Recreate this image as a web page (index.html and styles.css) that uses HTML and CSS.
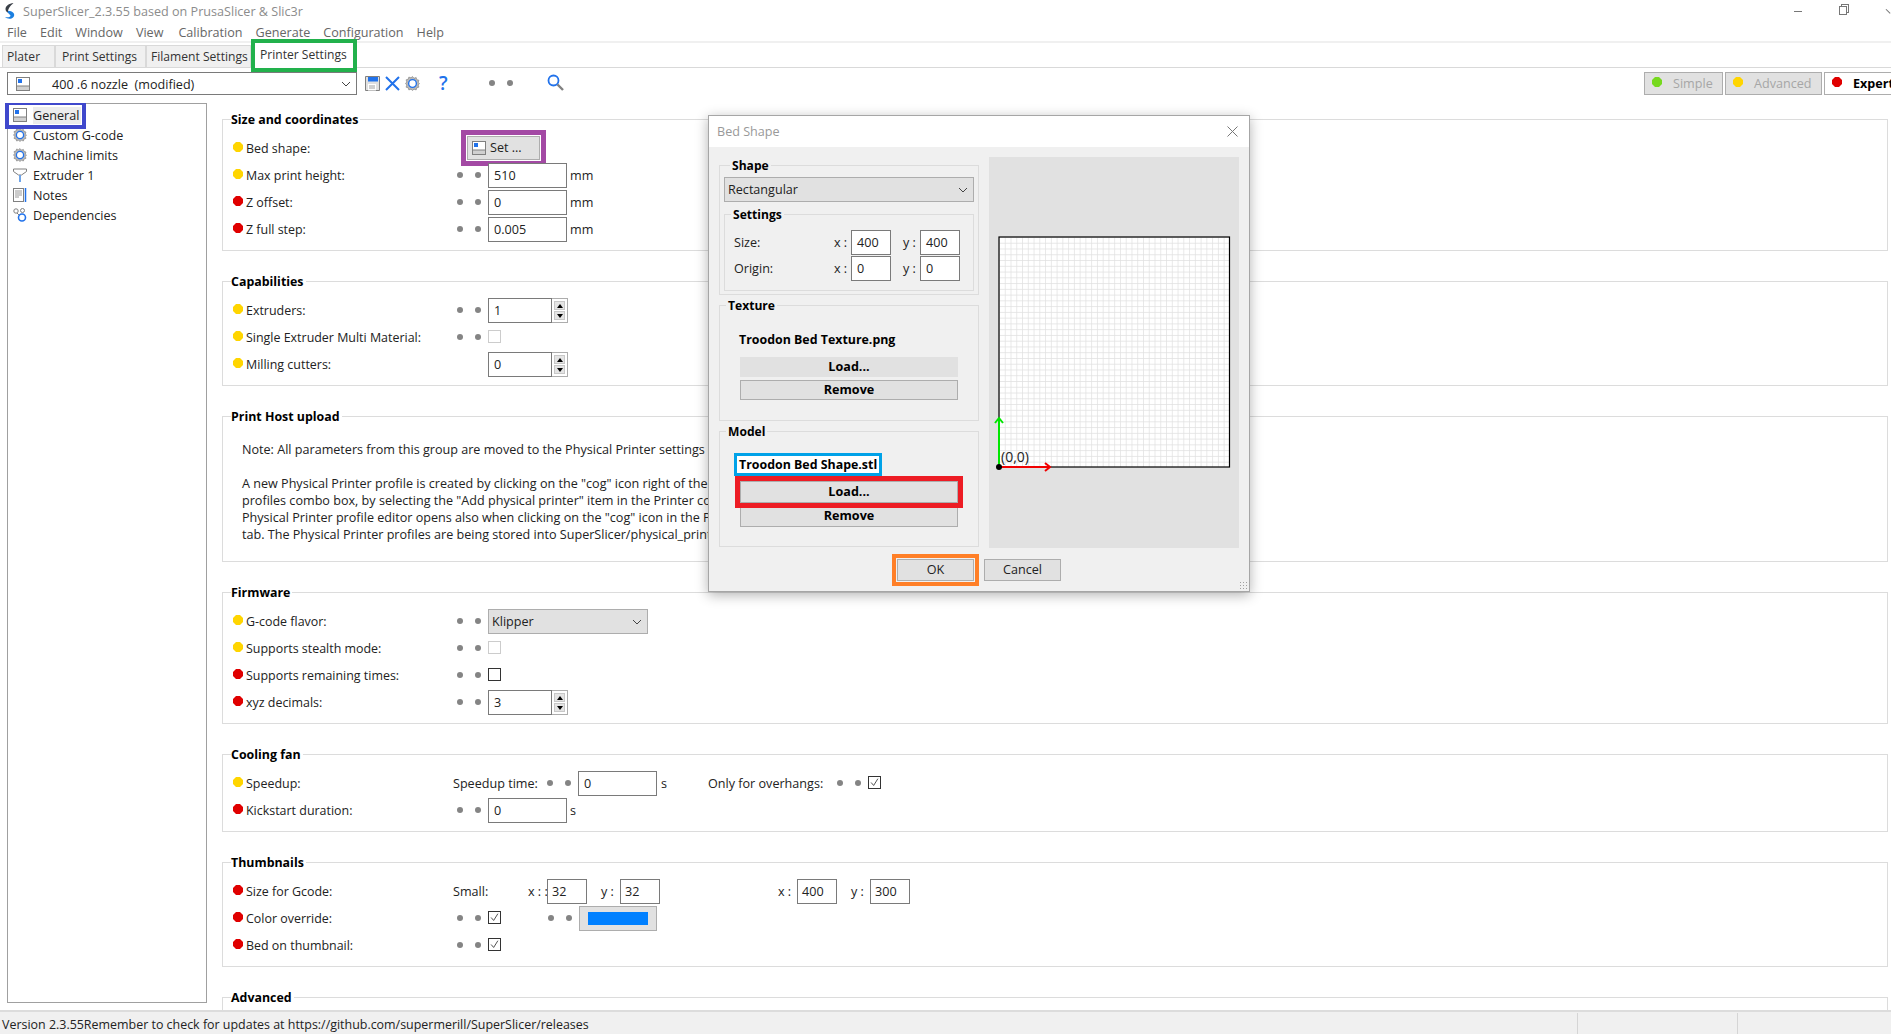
FILE: index.html
```html
<!DOCTYPE html>
<html lang="en">
<head>
    <meta charset="UTF-8">
    <title>SuperSlicer</title>
    <link rel="stylesheet" href="styles.css">
</head>
<body>
    <svg class="sprite" width="0" height="0">
        <symbol id="i-profile" viewBox="0 0 14 14">
            <rect x="0.5" y="0.5" width="13" height="13" fill="#fff" stroke="#808080"/>
            <rect x="1" y="9" width="12" height="4" fill="#d0d0d0"/>
            <path d="M1 9h12" stroke="#808080"/>
            <rect x="2" y="2" width="4" height="4" fill="#2172eb"/>
        </symbol>
        <symbol id="i-cog" viewBox="0 0 14 14">
            <path d="M7 .5l1.400 1.600 2-.7.6 2 2 .6-.7 2L13.500 7l-1.200 1.400.7 2-2 .6-.6 2-2-.7L7 13.500l-1.400-1.200-2 .7-.6-2-2-.6.7-2L.5 7l1.200-1.400-.7-2 2-.6.6-2 2 .7z" fill="#b8b8b8" stroke="#808080" stroke-width=".6"/>
            <circle cx="7" cy="7" r="3.600" fill="#fff" stroke="#2172eb" stroke-width="1.300"/>
        </symbol>
        <symbol id="i-extruder" viewBox="0 0 14 14">
            <path d="M.5 1h13v2.500L8.500 7H5.500L.5 3.500z" fill="#fff" stroke="#808080"/>
            <path d="M7 7v7" stroke="#6fa4e8" stroke-width="2"/>
        </symbol>
        <symbol id="i-notes" viewBox="0 0 14 14">
            <rect x="0.5" y="0.5" width="10" height="13" fill="#fff" stroke="#808080"/>
            <path d="M2 3h7M2 5h7M2 7h7M2 9h4" stroke="#9a9a9a"/>
            <path d="M12.500 0v14" stroke="#2172eb" stroke-width="1.500"/>
        </symbol>
        <symbol id="i-deps" viewBox="0 0 14 14">
            <circle cx="3" cy="3" r="2.200" fill="#fff" stroke="#808080"/>
            <circle cx="9.500" cy="2.500" r="2" fill="#fff" stroke="#808080"/>
            <circle cx="9" cy="9.500" r="3.500" fill="#fff" stroke="#2172eb" stroke-width="1.600"/>
            <path d="M4 5l2 2" stroke="#808080"/>
        </symbol>
        <symbol id="i-save" viewBox="0 0 15 15">
            <path d="M.5.5h14v14H.5z" fill="#e0e0e0" stroke="#808080"/>
            <rect x="3" y="1" width="10" height="4.500" fill="#2172eb"/>
            <rect x="3" y="8" width="8" height="6.500" fill="#fff"/>
            <path d="M4 10h6M4 12h6" stroke="#a0a0a0"/>
        </symbol>
        <symbol id="i-close" viewBox="0 0 15 15">
            <path d="M1 1l13 13M14 1L1 14" stroke="#2172eb" stroke-width="2" fill="none"/>
        </symbol>
        <symbol id="i-search" viewBox="0 0 17 17">
            <circle cx="6.500" cy="6.500" r="5" fill="#fff" stroke="#2172eb" stroke-width="1.800"/>
            <path d="M10.500 10.500l5.500 5.500" stroke="#808080" stroke-width="2.400"/>
        </symbol>
        <symbol id="i-check" viewBox="0 0 13 13">
            <path d="M2.500 6.500l3 3.500 5-8" fill="none" stroke="#333" stroke-width="1"/>
        </symbol>
        <symbol id="i-caret" viewBox="0 0 10 6">
            <path d="M1 1l4 4 4-4" fill="none" stroke="#444" stroke-width="1"/>
        </symbol>
    </svg>

    <div class="titlebar">
        <svg class="app-logo" viewBox="0 0 12 16">
            <path d="M3 8c2-.5 5 .5 6.500 2 1.500 2 .5 4.500-2 5.500-2.500.5-5 0-6.500-1.500 2 .5 5 .5 5.500-1 .3-1.500-3-2.500-3.500-5z" fill="#1b7fe0"/>
            <path d="M9.500 0C5 .5 1.500 3 1.500 6c0 2 1 3 2.500 3.500C3.500 6.500 6 3 9.500 0z" fill="#3a3f47"/>
        </svg>
        <span class="app-title">SuperSlicer_2.3.55 based on PrusaSlicer &amp; Slic3r</span>
        <div class="window-buttons">
            <span class="win-min"></span>
            <span class="win-restore"></span>
            <span class="win-close"></span>
        </div>
    </div>

    <div class="menubar">
        <span>File</span><span>Edit</span><span>Window</span><span class="menu-view">View</span><span>Calibration</span><span>Generate</span><span>Configuration</span><span>Help</span>
    </div>

    <div class="tabs">
        <div class="tab tab-plater">Plater</div>
        <div class="tab tab-print">Print Settings</div>
        <div class="tab tab-filament">Filament Settings</div>
        <div class="tab tab-active">Printer Settings</div>
    </div>

    <div class="toolbar">
        <div class="preset">
            <svg class="ico"><use href="#i-profile"/></svg>
            <span class="preset-name">400 .6 nozzle&nbsp; (modified)</span>
            <svg class="caret"><use href="#i-caret"/></svg>
        </div>
        <svg class="tool tool-save"><use href="#i-save"/></svg>
        <svg class="tool tool-close"><use href="#i-close"/></svg>
        <svg class="tool tool-cog"><use href="#i-cog"/></svg>
        <span class="tool-help">?</span>
        <span class="dots tool-dots"><i></i><i></i></span>
        <svg class="tool tool-search"><use href="#i-search"/></svg>
        <div class="modes">
            <div class="mode mode-simple"><b class="bullet green"></b>Simple</div>
            <div class="mode mode-advanced"><b class="bullet yellow"></b>Advanced</div>
            <div class="mode mode-expert"><b class="bullet red"></b>Expert</div>
        </div>
    </div>

    <div class="content">
        <div class="tree">
            <div class="tree-item tree-selected"><svg class="ico"><use href="#i-profile"/></svg><span>General</span></div>
            <div class="tree-item"><svg class="ico"><use href="#i-cog"/></svg><span>Custom G-code</span></div>
            <div class="tree-item"><svg class="ico"><use href="#i-cog"/></svg><span>Machine limits</span></div>
            <div class="tree-item"><svg class="ico"><use href="#i-extruder"/></svg><span>Extruder 1</span></div>
            <div class="tree-item"><svg class="ico"><use href="#i-notes"/></svg><span>Notes</span></div>
            <div class="tree-item"><svg class="ico"><use href="#i-deps"/></svg><span>Dependencies</span></div>
        </div>

        <div class="settings">
            <div class="group">
                <h3>Size and coordinates</h3>
                <div class="row">
                    <b class="bullet yellow"></b><label>Bed shape:</label>
                    <div class="set-button"><svg class="ico"><use href="#i-profile"/></svg>Set ...</div>
                </div>
                <div class="row">
                    <b class="bullet yellow"></b><label>Max print height:</label>
                    <span class="dots"><i></i><i></i></span>
                    <div class="input">510</div><span class="unit">mm</span>
                </div>
                <div class="row">
                    <b class="bullet red"></b><label>Z offset:</label>
                    <span class="dots"><i></i><i></i></span>
                    <div class="input">0</div><span class="unit">mm</span>
                </div>
                <div class="row">
                    <b class="bullet red"></b><label>Z full step:</label>
                    <span class="dots"><i></i><i></i></span>
                    <div class="input">0.005</div><span class="unit">mm</span>
                </div>
            </div>

            <div class="group">
                <h3>Capabilities</h3>
                <div class="row">
                    <b class="bullet yellow"></b><label>Extruders:</label>
                    <span class="dots"><i></i><i></i></span>
                    <div class="input input-spin">1</div><div class="spin"><s class="up"></s><s class="down"></s></div>
                </div>
                <div class="row">
                    <b class="bullet yellow"></b><label>Single Extruder Multi Material:</label>
                    <span class="dots"><i></i><i></i></span>
                    <span class="check check-off"></span>
                </div>
                <div class="row">
                    <b class="bullet yellow"></b><label>Milling cutters:</label>
                    <span class="dots dots-hidden"><i></i><i></i></span>
                    <div class="input input-spin">0</div><div class="spin"><s class="up"></s><s class="down"></s></div>
                </div>
            </div>

            <div class="group group-text">
                <h3>Print Host upload</h3>
                <p>Note: All parameters from this group are moved to the Physical Printer settings (see changelog).</p>
                <p>A new Physical Printer profile is created by clicking on the "cog" icon right of the Printer<br>
                profiles combo box, by selecting the "Add physical printer" item in the Printer combo box. The<br>
                Physical Printer profile editor opens also when clicking on the "cog" icon in the Printer Settings<br>
                tab. The Physical Printer profiles are being stored into SuperSlicer/physical_printer directory.</p>
            </div>

            <div class="group">
                <h3>Firmware</h3>
                <div class="row">
                    <b class="bullet yellow"></b><label>G-code flavor:</label>
                    <span class="dots"><i></i><i></i></span>
                    <div class="select select-flavor"><span>Klipper</span><svg class="caret"><use href="#i-caret"/></svg></div>
                </div>
                <div class="row">
                    <b class="bullet yellow"></b><label>Supports stealth mode:</label>
                    <span class="dots"><i></i><i></i></span>
                    <span class="check check-off"></span>
                </div>
                <div class="row">
                    <b class="bullet red"></b><label>Supports remaining times:</label>
                    <span class="dots"><i></i><i></i></span>
                    <span class="check"></span>
                </div>
                <div class="row">
                    <b class="bullet red"></b><label>xyz decimals:</label>
                    <span class="dots"><i></i><i></i></span>
                    <div class="input input-spin">3</div><div class="spin"><s class="up"></s><s class="down"></s></div>
                </div>
            </div>

            <div class="group">
                <h3>Cooling fan</h3>
                <div class="row">
                    <b class="bullet yellow"></b><label class="label-short">Speedup:</label>
                    <span class="sub-label">Speedup time:</span>
                    <span class="dots"><i></i><i></i></span>
                    <div class="input">0</div><span class="unit unit-s">s</span>
                    <span class="sub-label sub-overhang">Only for overhangs:</span>
                    <span class="dots"><i></i><i></i></span>
                    <span class="check"><svg><use href="#i-check"/></svg></span>
                </div>
                <div class="row">
                    <b class="bullet red"></b><label>Kickstart duration:</label>
                    <span class="dots"><i></i><i></i></span>
                    <div class="input">0</div><span class="unit">s</span>
                </div>
            </div>

            <div class="group">
                <h3>Thumbnails</h3>
                <div class="row">
                    <b class="bullet red"></b><label class="label-short">Size for Gcode:</label>
                    <span class="sub-small">Small:</span>
                    <span class="axis">x : :</span><div class="input input-small">32</div>
                    <span class="axis axis-gap">y :</span><div class="input input-small">32</div>
                    <span class="axis axis-far">x :</span><div class="input input-small">400</div>
                    <span class="axis axis-gap">y :</span><div class="input input-small">300</div>
                </div>
                <div class="row">
                    <b class="bullet red"></b><label>Color override:</label>
                    <span class="dots"><i></i><i></i></span>
                    <span class="check"><svg><use href="#i-check"/></svg></span>
                    <span class="dots dots-color"><i></i><i></i></span>
                    <div class="color-button"><span class="swatch"></span></div>
                </div>
                <div class="row">
                    <b class="bullet red"></b><label>Bed on thumbnail:</label>
                    <span class="dots"><i></i><i></i></span>
                    <span class="check"><svg><use href="#i-check"/></svg></span>
                </div>
            </div>

            <div class="group">
                <h3>Advanced</h3>
            </div>
        </div>
    </div>

    <div class="statusbar">
        <span class="status-text">Version 2.3.55Remember to check for updates at https://github.com/supermerill/SuperSlicer/releases</span>
        <span class="status-cell"></span>
        <span class="status-cell status-last"></span>
    </div>

    <div class="dialog">
        <div class="dialog-title">
            <span>Bed Shape</span>
            <svg class="dialog-close" viewBox="0 0 11 11"><path d="M.5.5l10 10M10.500.5l-10 10" stroke="#777" fill="none"/></svg>
        </div>
        <div class="dialog-body">
            <div class="dialog-left">
                <div class="box box-shape">
                    <h4>Shape</h4>
                    <div class="select select-shape"><span>Rectangular</span><svg class="caret"><use href="#i-caret"/></svg></div>
                    <div class="box box-settings">
                        <h4>Settings</h4>
                        <div class="dim-row">
                            <span class="dim-label">Size:</span>
                            <span class="dim-axis">x :</span><div class="input input-dim">400</div>
                            <span class="dim-axis dim-y">y :</span><div class="input input-dim">400</div>
                        </div>
                        <div class="dim-row">
                            <span class="dim-label">Origin:</span>
                            <span class="dim-axis">x :</span><div class="input input-dim">0</div>
                            <span class="dim-axis dim-y">y :</span><div class="input input-dim">0</div>
                        </div>
                    </div>
                </div>
                <div class="box box-file">
                    <h4>Texture</h4>
                    <div class="file-name">Troodon Bed Texture.png</div>
                    <div class="file-button file-load">Load...</div>
                    <div class="file-button file-remove">Remove</div>
                </div>
                <div class="box box-file box-model">
                    <h4>Model</h4>
                    <div class="file-name file-marked">Troodon Bed Shape.stl</div>
                    <div class="file-button file-marked-load">Load...</div>
                    <div class="file-button file-remove-model">Remove</div>
                </div>
            </div>
            <div class="bed-panel">
                <svg class="bed" viewBox="0 0 250 391">
                    <defs>
                        <pattern id="bed-grid" width="5.76" height="5.76" patternUnits="userSpaceOnUse" x="10" y="80">
                            <path d="M5.760 0H0V5.760" fill="none" stroke="#e0e0e0" stroke-width="1.400"/>
                        </pattern>
                    </defs>
                    <rect x="10" y="80" width="230.500" height="230" fill="#fff"/>
                    <rect x="10" y="80" width="230.500" height="230" fill="url(#bed-grid)"/>
                    <rect x="10" y="80" width="230.500" height="230" fill="none" stroke="#000" stroke-width="1.200"/>
                    <path d="M10 310V261M6 266l4-5 4 5" fill="none" stroke="#00e600" stroke-width="2"/>
                    <path d="M10 310H61M56 306l5 4-5 4" fill="none" stroke="#f00000" stroke-width="2"/>
                    <circle cx="10" cy="310" r="3" fill="#000"/>
                    <text x="12" y="305" class="bed-origin">(0,0)</text>
                </svg>
            </div>
        </div>
        <div class="dialog-actions">
            <div class="push-button button-ok">OK</div>
            <div class="push-button">Cancel</div>
        </div>
        <span class="grip"></span>
    </div>
</body>
</html>
```

FILE: styles.css
```css
* {
    box-sizing: border-box;
}

html, body {
    margin: 0;
    padding: 0;
    height: 100%;
    overflow: hidden;
}

body {
    position: relative;
    width: 1891px;
    height: 1034px;
    background-color: white;
    color: #222;
    font-family: 'Open Sans', 'Noto Sans', sans-serif;
    font-size: 12.6px;
    line-height: 17px;
}

.sprite {
    position: absolute;
}

/* title and menu */
.titlebar {
    display: flex;
    align-items: center;
    height: 22px;
    padding-left: 4px;
}

.app-logo {
    width: 12px;
    height: 16px;
    margin-right: 7px;
}

.app-title {
    color: #8c8c8c;
}

.window-buttons {
    margin-left: auto;
    display: flex;
    align-items: center;
    height: 18px;
    width: 97px;
}

.win-min {
    width: 10px;
    height: 1px;
    background-color: #777;
    margin-right: 37px;
}

.win-restore {
    position: relative;
    width: 9px;
    height: 9px;
    border: 1px solid #777;
    margin-top: -1px;
    background-color: white;
    margin-right: 38px;
    box-shadow: 2px -2px 0 -1px white, 2px -2px 0 0 #777;
}

.win-close {
    width: 8px;
    height: 1px;
    background-color: #777;
    transform: rotate(45deg);
}

.menubar {
    display: flex;
    align-items: center;
    height: 21px;
    padding: 2px 0 0 7px;
    border-bottom: 2px solid #f0f0f0;
    color: #666;
}

.menubar span {
    margin-right: 13px;
}

.menubar .menu-view {
    margin-right: 15px;
}

/* notebook tabs */
.tabs {
    display: flex;
    height: 23px;
    margin-top: 2px;
    padding-left: 2px;
    border-bottom: 1px solid #d9d9d9;
    font-size: 12.1px;
}

.tab {
    background-color: #f0f0f0;
    border: 1px solid #d9d9d9;
    border-bottom: none;
    padding: 2px 0 0 4px;
    color: #333;
    white-space: nowrap;
}

.tab-plater {
    width: 53px;
}

.tab-print {
    width: 91px;
    padding-left: 6px;
}

.tab-filament {
    width: 105px;
}

.tab-active {
    width: 98px;
    margin-left: 4px;
    margin-top: -2px;
    height: 25px;
    background-color: white;
    border: none;
    padding: 3px 0 0 5px;
    outline: 4px solid #22b14c;
    outline-offset: 0;
}

/* toolbar */
.toolbar {
    display: flex;
    align-items: center;
    height: 23px;
    margin-top: 4px;
    padding-left: 7px;
}

.preset {
    display: flex;
    align-items: center;
    width: 350px;
    height: 23px;
    padding: 0 5px 0 8px;
    border: 1px solid #7a7a7a;
}

.ico {
    width: 14px;
    height: 14px;
    flex-shrink: 0;
}

.preset-name {
    margin-left: 22px;
    padding-top: 1px;
    flex: 1;
}

.caret {
    width: 10px;
    height: 6px;
}

.tool {
    flex-shrink: 0;
}

.tool-save {
    width: 15px;
    height: 15px;
    margin-left: 8px;
}

.tool-close {
    width: 15px;
    height: 15px;
    margin-left: 5px;
}

.tool-cog {
    width: 15px;
    height: 15px;
    margin-left: 5px;
}

.tool-help {
    margin-left: 19px;
    width: 12px;
    color: #2172eb;
    font-size: 19px;
    font-weight: 600;
}

.tool-dots {
    margin-left: 38px;
    margin-right: 0;
}

.tool-search {
    width: 17px;
    height: 17px;
    margin-left: 27px;
    margin-top: -3px;
}

.modes {
    display: flex;
    margin-left: auto;
    margin-right: -20px;
    gap: 2px;
}

.mode {
    display: flex;
    align-items: center;
    height: 23px;
    padding-left: 7px;
    background-color: #e1e1e1;
    border: 1px solid #adadad;
    color: #a6a6a6;
}

.mode .bullet {
    margin-right: 11px;
}

.mode-simple {
    width: 79px;
}

.mode-advanced {
    width: 97px;
}

.mode-expert {
    width: 87px;
    color: black;
    font-weight: 700;
    background-color: white;
}

/* main area */
.content {
    display: flex;
    height: 907px;
    margin-top: 8px;
    padding-left: 7px;
    overflow: hidden;
}

.tree {
    width: 200px;
    height: 900px;
    flex-shrink: 0;
    padding: 1px 0 0 5px;
    border: 1px solid #a0a0a0;
}

.tree-item {
    display: flex;
    align-items: center;
    height: 20px;
}

.tree-item .ico {
    margin-right: 6px;
}

.tree-selected {
    width: 73px;
    margin-left: -4px;
    padding-left: 4px;
    outline: 4px solid #3f48cc;
    outline-offset: 0;
}

.tree-selected span {
    background-color: #ececec;
    padding-right: 2px;
}

.settings {
    flex: 1;
    margin-left: 15px;
    margin-right: 3px;
    padding-top: 16px;
}

.group {
    border: 1px solid #dcdcdc;
    margin-bottom: 30px;
    padding: 0 0 7px 10px;
}

.group h3 {
    display: table;
    margin: -9px 0 6px -2px;
    padding: 0 2px 0 0;
    font-size: 12.4px;
    font-weight: 700;
    line-height: 18px;
    color: black;
    background-color: white;
}

.group-text {
    height: 146px;
}

.group-text p {
    margin: 0 0 17px 9px;
    white-space: nowrap;
    color: #222;
}

.group-text h3 {
    margin-bottom: 15px;
}

.row {
    display: flex;
    align-items: center;
    height: 27px;
    white-space: nowrap;
}

.bullet {
    display: block;
    width: 10px;
    height: 10px;
    clip-path: polygon(30% 0, 70% 0, 100% 30%, 100% 70%, 70% 100%, 30% 100%, 0 70%, 0 30%);
    margin-top: -3px;
    flex-shrink: 0;
}

.green {
    background-color: #76d91e;
}

.yellow {
    background-color: #ffd500;
}

.red {
    background-color: #e00000;
}

.row label {
    width: 211px;
    margin-left: 3px;
    flex-shrink: 0;
    font-size: 12.45px;
}

.row .label-short {
    width: 207px;
}

.dots {
    display: flex;
    gap: 12px;
    width: 24px;
    margin-right: 7px;
    margin-top: -2px;
    flex-shrink: 0;
}

.dots i {
    width: 6px;
    height: 6px;
    border-radius: 50%;
    background-color: #848484;
}

.dots-hidden {
    visibility: hidden;
}

.dots-color {
    margin-left: 47px;
    margin-right: 7px;
}

.input {
    width: 79px;
    height: 25px;
    padding: 3px 0 0 5px;
    background-color: white;
    border: 1px solid #7a7a7a;
    flex-shrink: 0;
}

.input-spin {
    width: 64px;
    height: 25px;
}

.input-small {
    width: 40px;
    padding-left: 4px;
}

.spin {
    display: flex;
    flex-direction: column;
    width: 16px;
    height: 25px;
    padding: 2px;
    gap: 1px;
    border: 1px solid #adadad;
    border-left: none;
}

.spin s {
    flex: 1;
    position: relative;
    background-color: #e4e4e4;
    border: 1px solid #c8c8c8;
}

.spin s::after {
    content: "";
    position: absolute;
    left: 2px;
    top: 2px;
    border-left: 3px solid transparent;
    border-right: 3px solid transparent;
}

.spin .up::after {
    border-bottom: 4px solid black;
}

.spin .down::after {
    border-top: 4px solid black;
}

.unit {
    margin-left: 3px;
}

.unit-s {
    width: 47px;
    margin-left: 4px;
}

.check {
    width: 13px;
    height: 13px;
    border: 1px solid #333;
    background-color: white;
    flex-shrink: 0;
    margin-top: -2px;
}

.check svg {
    display: block;
    width: 11px;
    height: 11px;
}

.check-off {
    border-color: #ccc;
}

.set-button {
    display: flex;
    align-items: center;
    width: 73px;
    height: 24px;
    margin-left: 10px;
    margin-top: -2px;
    padding-left: 4px;
    background-color: #e1e1e1;
    border: 1px solid #adadad;
    outline: 5px solid #a349a4;
    outline-offset: 1px;
}

.set-button .ico {
    margin-right: 4px;
}

.select {
    display: flex;
    align-items: center;
    justify-content: space-between;
    padding: 0 5px 0 3px;
    background-color: #e1e1e1;
    border: 1px solid #adadad;
}

.select-flavor {
    width: 160px;
    height: 25px;
}

.sub-label {
    width: 94px;
    flex-shrink: 0;
}

.sub-overhang {
    width: 129px;
}

.sub-small {
    width: 75px;
    flex-shrink: 0;
}

.axis {
    width: 19px;
    flex-shrink: 0;
}

.axis-gap {
    margin-left: 14px;
}

.axis-far {
    margin-left: 118px;
}

.color-button {
    display: flex;
    align-items: center;
    justify-content: center;
    width: 78px;
    height: 25px;
    background-color: #e1e1e1;
    border: 1px solid #adadad;
}

.swatch {
    width: 60px;
    height: 13px;
    background-color: #0080ff;
}

/* status bar */
.statusbar {
    display: flex;
    align-items: stretch;
    height: 24px;
    padding-left: 2px;
    background-color: #f0f0f0;
    border-top: 2px solid #dcdcdc;
}

.status-text {
    flex: 1;
    padding-top: 4px;
    font-size: 12.45px;
}

.status-cell {
    width: 160px;
    margin-top: 1px;
    border-left: 1px solid #d5d5d5;
}

.status-last {
    width: 154px;
}

/* Bed Shape dialog */
.dialog {
    position: absolute;
    left: 708px;
    top: 115px;
    width: 542px;
    height: 477px;
    background-color: #f0f0f0;
    border: 1px solid #a6a6a6;
    box-shadow: 0 3px 12px rgba(0, 0, 0, 0.3);
}

.dialog-title {
    display: flex;
    align-items: center;
    justify-content: space-between;
    height: 31px;
    padding: 0 11px 0 8px;
    background-color: white;
    color: #999;
}

.dialog-close {
    width: 11px;
    height: 11px;
}

.dialog-body {
    display: flex;
    padding: 10px 9px 0 10px;
}

.dialog-left {
    width: 260px;
    padding-top: 8px;
}

.box {
    border: 1px solid #dcdcdc;
    position: relative;
}

.box h4 {
    display: table;
    margin: -9px 0 0 6px;
    padding: 0 2px;
    font-size: 12.1px;
    font-weight: 700;
    line-height: 18px;
    color: black;
    background-color: #f0f0f0;
}

.box-shape {
    height: 130px;
    padding: 0 4px;
    margin-bottom: 10px;
}

.select-shape {
    height: 25px;
    margin-top: 2px;
}

.box-settings {
    height: 77px;
    margin-top: 12px;
}

.box-settings h4 {
    margin-left: 6px;
    margin-bottom: 5px;
}

.dim-row {
    display: flex;
    align-items: center;
    height: 26px;
    padding-left: 9px;
}

.dim-label {
    width: 100px;
}

.dim-axis {
    width: 17px;
}

.dim-y {
    width: 17px;
    margin-left: 12px;
}

.input-dim {
    width: 40px;
    height: 25px;
}

.box-file {
    height: 116px;
    margin-bottom: 10px;
    padding-left: 20px;
}

.box-model {
    margin-bottom: 0;
}

.box-file h4 {
    margin-left: -14px;
}

.file-name {
    width: max-content;
    margin: 16px 0 9px -1px;
    color: black;
    font-weight: 700;
    font-size: 12.4px;
}

.file-marked {
    margin-top: 15px;
    margin-left: -3px;
    margin-bottom: 6px;
    outline: 3px solid #00a2e8;
    background-color: white;
    padding: 0 2px;
}

.file-button {
    width: 218px;
    height: 20px;
    text-align: center;
    line-height: 18px;
    font-weight: 700;
    color: black;
    background-color: #e1e1e1;
}

.file-load {
    margin-bottom: 3px;
    line-height: 20px;
}

.file-remove {
    border: 1px solid #adadad;
}

.file-marked-load {
    height: 22px;
    margin-top: 8px;
    border: 1px solid #adadad;
    outline: 5px solid #ed1c24;
    line-height: 20px;
}

.file-remove-model {
    height: 24px;
    border: 1px solid #adadad;
    line-height: 24px;
}

.bed-panel {
    width: 250px;
    height: 391px;
    margin-left: 10px;
    background-color: #e1e1e1;
}

.bed {
    display: block;
    width: 250px;
    height: 391px;
}

.bed-origin {
    font-family: 'Open Sans', sans-serif;
    font-size: 14px;
    fill: #222;
}

.dialog-actions {
    display: flex;
    gap: 10px;
    padding: 11px 0 0 188px;
}

.push-button {
    width: 77px;
    height: 22px;
    text-align: center;
    line-height: 20px;
    background-color: #e1e1e1;
    border: 1px solid #adadad;
}

.button-ok {
    outline: 4px solid #ff7f27;
    outline-offset: 1px;
}

.grip {
    position: absolute;
    right: 2px;
    bottom: 2px;
    width: 8px;
    height: 8px;
    background-image: radial-gradient(#a0a0a0 1px, transparent 1px);
    background-size: 3px 3px;
}
```
